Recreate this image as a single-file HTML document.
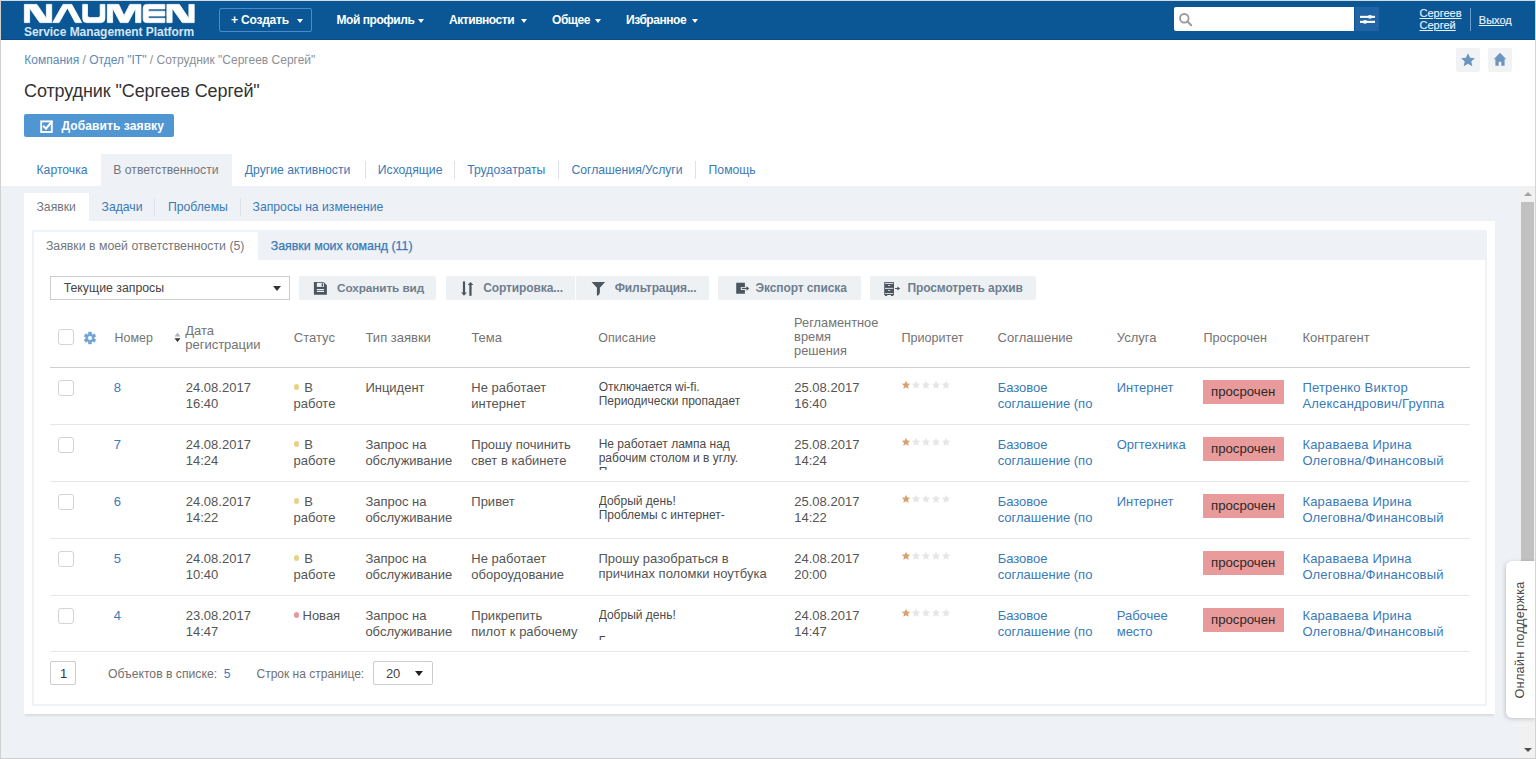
<!DOCTYPE html>
<html><head><meta charset="utf-8"><title>Naumen SMP</title>
<style>
html,body{margin:0;padding:0;width:1536px;height:759px;overflow:hidden;background:#fff;font-family:"Liberation Sans", sans-serif;}
.r{position:absolute;}
.t{position:absolute;white-space:nowrap;}
.caret{position:absolute;width:0;height:0;border-style:solid;border-width:4px 4px 0 4px;border-color:transparent;border-top-color:#fff;}
u{text-decoration:underline;text-underline-offset:1px;}
</style></head><body>
<div class="r" style="left:0px;top:0px;width:1536px;height:759px;background:#fff"></div>
<div class="r" style="left:1px;top:186px;width:1534px;height:572px;background:#eef1f5"></div>
<div class="r" style="left:1px;top:1px;width:1534px;height:39px;background:#0b5795"></div>
<div class="r" style="left:1px;top:39px;width:1534px;height:1px;background:#0a4c88"></div>
<svg class="r" style="left:0;top:0" width="200" height="40" viewBox="0 0 200 40">
<g fill="#fff" stroke="#fff" stroke-width="0.8" stroke-linejoin="round">
<path d="M24.4,4.4 H36.9 L46.4,18.4 V4.4 H51.7 V22.6 H39.8 L29.6,8.2 V22.6 H24.4 Z"/>
<path d="M52.7,22.6 L63,4.4 H71.8 L81.7,22.6 H75.3 L67.4,7.9 L59.1,22.6 Z"/>
<path d="M82.7,4.4 H87.5 V15.4 Q87.5,17.6 89.7,17.6 H98 Q100.2,17.6 100.2,15.4 V4.4 H104.9 V18.6 Q104.9,22.6 100.9,22.6 H86.7 Q82.7,22.6 82.7,18.6 Z"/>
<path d="M107.4,22.6 V4.4 H118.8 L124,15.7 L129.8,4.4 H140.9 V22.6 H135.6 V8.2 L128.1,22.6 H120.3 L112.6,8.2 V22.6 Z"/>
<path d="M143.2,7.8 Q143.2,4.4 146.6,4.4 H164.8 V8.9 H148.3 V11.2 H164.8 V16 H148.3 V18.3 H164.8 V22.6 H146.6 Q143.2,22.6 143.2,19.2 Z"/>
<path d="M166.9,4.4 H179.4 L188.9,18.4 V4.4 H194.2 V22.6 H182.3 L172.1,8.2 V22.6 H166.9 Z"/>
</g></svg>
<div class="t" style="left:24.0px;top:24.54px;font-size:12px;line-height:14px;color:#d3e6f8;font-weight:bold;letter-spacing:-0.05px">Service Management Platform</div>
<div class="r" style="left:219px;top:8px;width:93px;height:24px;border:1px solid #4a8ccb;border-radius:2px;box-sizing:border-box"></div>
<div class="t" style="left:231.0px;top:12.04px;font-size:12px;line-height:16px;color:#fff;font-weight:bold;letter-spacing:-0.2px">+ Создать</div>
<div class="caret" style="left:297px;top:19px;border-top-color:#fff;border-width:4px 3.5px 0 3.5px"></div>
<div class="t" style="left:336.5px;top:12.04px;font-size:12px;line-height:16px;color:#fff;font-weight:bold;letter-spacing:-0.45px">Мой профиль</div>
<div class="caret" style="left:418px;top:19px;border-top-color:#fff;border-width:4px 3px 0 3px"></div>
<div class="t" style="left:449.0px;top:12.04px;font-size:12px;line-height:16px;color:#fff;font-weight:bold;letter-spacing:-0.45px">Активности</div>
<div class="caret" style="left:521px;top:19px;border-top-color:#fff;border-width:4px 3px 0 3px"></div>
<div class="t" style="left:552.0px;top:12.04px;font-size:12px;line-height:16px;color:#fff;font-weight:bold;letter-spacing:-0.45px">Общее</div>
<div class="caret" style="left:595px;top:19px;border-top-color:#fff;border-width:4px 3px 0 3px"></div>
<div class="t" style="left:626.0px;top:12.04px;font-size:12px;line-height:16px;color:#fff;font-weight:bold;letter-spacing:-0.45px">Избранное</div>
<div class="caret" style="left:692px;top:19px;border-top-color:#fff;border-width:4px 3px 0 3px"></div>
<div class="r" style="left:1174px;top:7px;width:180px;height:24px;background:#fff;border-radius:2px 0 0 2px"></div>
<svg class="r" style="left:1178px;top:12px" width="16" height="16" viewBox="0 0 16 16"><circle cx="6.3" cy="6.3" r="4.3" fill="none" stroke="#9a9a9a" stroke-width="1.8"/><path d="M9.5,9.5 L13.2,13.2" stroke="#9a9a9a" stroke-width="2" stroke-linecap="round"/></svg>
<div class="r" style="left:1355px;top:7px;width:24px;height:24px;background:#2064a5"></div>
<svg class="r" style="left:1355px;top:7px" width="24" height="24" viewBox="0 0 24 24"><g fill="#fff"><rect x="5" y="8.8" width="15" height="2.1"/><rect x="5" y="13.8" width="15" height="2.1"/><ellipse cx="15" cy="9.85" rx="2.2" ry="1.9"/><ellipse cx="10" cy="14.85" rx="2.2" ry="1.9"/></g></svg>
<div class="t" style="left:1419.5px;top:7.49px;font-size:11px;line-height:12px;color:#e9f1fa;font-weight:normal;-webkit-text-stroke:0.15px currentColor"><u>Сергеев</u></div>
<div class="t" style="left:1419.5px;top:19.39px;font-size:11px;line-height:12px;color:#e9f1fa;font-weight:normal;-webkit-text-stroke:0.15px currentColor"><u>Сергей</u></div>
<div class="r" style="left:1470px;top:8px;width:1px;height:23px;background:#6d9dd0"></div>
<div class="t" style="left:1478.8px;top:14.09px;font-size:11px;line-height:12px;color:#e9f1fa;font-weight:normal;-webkit-text-stroke:0.15px currentColor"><u>Выход</u></div>
<div class="r" style="left:1456px;top:48px;width:24px;height:24px;background:#f0f2f4;border-radius:2px"></div>
<div class="r" style="left:1488px;top:48px;width:24px;height:24px;background:#f0f2f4;border-radius:2px"></div>
<svg class="r" style="left:1456px;top:48px" width="24" height="24" viewBox="0 0 24 24"><path fill="#6b95bf" d="M12,5.3 L14.1,9.8 L18.9,10.3 L15.3,13.5 L16.3,18.3 L12,15.8 L7.7,18.3 L8.7,13.5 L5.1,10.3 L9.9,9.8 Z"/></svg>
<svg class="r" style="left:1488px;top:48px" width="24" height="24" viewBox="0 0 24 24"><path fill="#6b95bf" d="M12,4.8 L18.2,11.2 H16.6 V17.8 H13.3 V13.8 H10.7 V17.8 H7.4 V11.2 H5.8 Z"/></svg>
<div class="t" style="left:24.3px;top:52.74px;font-size:12px;line-height:14px;color:#8a8f95;font-weight:normal;"><span style="color:#5b8ab6">Компания</span> / <span style="color:#5b8ab6">Отдел "IT"</span> / Сотрудник "Сергеев Сергей"</div>
<div class="t" style="left:24.0px;top:79.86px;font-size:18px;line-height:22px;color:#333;font-weight:normal;letter-spacing:-0.1px">Сотрудник "Сергеев Сергей"</div>
<div class="r" style="left:24px;top:114px;width:150px;height:23px;background:#5096d3;border-radius:2px"></div>
<svg class="r" style="left:24px;top:110px" width="40" height="30" viewBox="0 0 40 30"><rect x="17.2" y="11.4" width="10.6" height="10.6" fill="none" stroke="#fff" stroke-width="1.9"/><path d="M19.2,15.8 L22,18.7 L28.3,11" fill="none" stroke="#fff" stroke-width="2"/></svg>
<div class="t" style="left:61.5px;top:118.24px;font-size:12px;line-height:16px;color:#fff;font-weight:bold;letter-spacing:0.1px">Добавить заявку</div>
<div class="r" style="left:101px;top:154px;width:131px;height:32px;background:#eef1f5"></div>
<div class="t" style="left:36.5px;top:161.97px;font-size:12.2px;line-height:16px;color:#3a7ab7;font-weight:normal;">Карточка</div>
<div class="t" style="left:113.3px;top:161.97px;font-size:12.2px;line-height:16px;color:#73777c;font-weight:normal;">В ответственности</div>
<div class="t" style="left:244.8px;top:161.97px;font-size:12.2px;line-height:16px;color:#3a7ab7;font-weight:normal;">Другие активности</div>
<div class="t" style="left:377.8px;top:161.97px;font-size:12.2px;line-height:16px;color:#3a7ab7;font-weight:normal;">Исходящие</div>
<div class="t" style="left:467.2px;top:161.97px;font-size:12.2px;line-height:16px;color:#3a7ab7;font-weight:normal;">Трудозатраты</div>
<div class="t" style="left:571.4px;top:161.97px;font-size:12.2px;line-height:16px;color:#3a7ab7;font-weight:normal;">Соглашения/Услуги</div>
<div class="t" style="left:708.6px;top:161.97px;font-size:12.2px;line-height:16px;color:#3a7ab7;font-weight:normal;">Помощь</div>
<div class="r" style="left:365px;top:161px;width:1px;height:18px;background:#dde2e8"></div>
<div class="r" style="left:454px;top:161px;width:1px;height:18px;background:#dde2e8"></div>
<div class="r" style="left:558px;top:161px;width:1px;height:18px;background:#dde2e8"></div>
<div class="r" style="left:695px;top:161px;width:1px;height:18px;background:#dde2e8"></div>
<div class="r" style="left:24px;top:193px;width:65px;height:28px;background:#fff"></div>
<div class="t" style="left:36.5px;top:199.17px;font-size:12.2px;line-height:16px;color:#73777c;font-weight:normal;">Заявки</div>
<div class="t" style="left:101.6px;top:199.17px;font-size:12.2px;line-height:16px;color:#3a7ab7;font-weight:normal;">Задачи</div>
<div class="t" style="left:168.0px;top:199.17px;font-size:12.2px;line-height:16px;color:#3a7ab7;font-weight:normal;">Проблемы</div>
<div class="t" style="left:252.6px;top:199.17px;font-size:12.2px;line-height:16px;color:#3a7ab7;font-weight:normal;">Запросы на изменение</div>
<div class="r" style="left:154px;top:198px;width:1px;height:18px;background:#dde2e8"></div>
<div class="r" style="left:240px;top:198px;width:1px;height:18px;background:#dde2e8"></div>
<div class="r" style="left:24px;top:221px;width:1471px;height:493px;background:#fff;box-shadow:0 3px 2px -1px rgba(0,0,0,0.09)"></div>
<div class="r" style="left:32px;top:230px;width:1455px;height:476px;border:2px solid #f0f3f6;box-sizing:border-box;background:#fff"></div>
<div class="r" style="left:32px;top:230px;width:1455px;height:30px;background:#eef1f5"></div>
<div class="r" style="left:34px;top:232px;width:224px;height:28px;background:#fff"></div>
<div class="t" style="left:45.9px;top:237.74px;font-size:12.3px;line-height:16px;color:#73777c;font-weight:normal;">Заявки в моей ответственности (5)</div>
<div class="t" style="left:270.7px;top:237.70px;font-size:12.4px;line-height:16px;color:#3a7ab7;font-weight:normal;-webkit-text-stroke:0.25px currentColor">Заявки моих команд (11)</div>
<div class="r" style="left:50px;top:276px;width:240px;height:24px;border:1px solid #c9cdd2;box-sizing:border-box;background:#fff"></div>
<div class="t" style="left:63.7px;top:279.74px;font-size:12.3px;line-height:16px;color:#444;font-weight:normal;">Текущие запросы</div>
<div class="caret" style="left:273px;top:286px;border-top-color:#333;border-width:5px 4px 0 4px"></div>
<div class="r" style="left:299px;top:276px;width:137px;height:24px;background:#eef1f4;border-radius:2px"></div>
<div class="r" style="left:446px;top:276px;width:130px;height:24px;background:#eef1f4;border-radius:2px"></div>
<div class="r" style="left:576px;top:276px;width:133px;height:24px;background:#eef1f4;border-radius:2px"></div>
<div class="r" style="left:718px;top:276px;width:143px;height:24px;background:#eef1f4;border-radius:2px"></div>
<div class="r" style="left:870px;top:276px;width:166px;height:24px;background:#eef1f4;border-radius:2px"></div>
<div class="r" style="left:575px;top:276px;width:1px;height:24px;background:#fff"></div>
<div class="t" style="left:337.0px;top:279.91px;font-size:11.8px;line-height:16px;color:#6e7f8f;font-weight:bold;letter-spacing:-0.1px">Сохранить вид</div>
<div class="t" style="left:483.2px;top:279.84px;font-size:12px;line-height:16px;color:#6e7f8f;font-weight:bold;letter-spacing:-0.1px">Сортировка...</div>
<div class="t" style="left:614.7px;top:279.84px;font-size:12px;line-height:16px;color:#6e7f8f;font-weight:bold;letter-spacing:-0.1px">Фильтрация...</div>
<div class="t" style="left:755.5px;top:279.84px;font-size:12px;line-height:16px;color:#6e7f8f;font-weight:bold;letter-spacing:-0.1px">Экспорт списка</div>
<div class="t" style="left:907.4px;top:279.84px;font-size:12px;line-height:16px;color:#6e7f8f;font-weight:bold;letter-spacing:-0.1px">Просмотреть архив</div>
<svg class="r" style="left:306px;top:276px" width="30" height="24" viewBox="0 0 30 24"><path fill="#4d565f" d="M7.9,5.9 H17.6 L20.9,9.2 V18.8 H7.9 Z"/><rect x="10.9" y="6.8" width="7.1" height="4.1" fill="#eef1f4"/><rect x="15.6" y="7.3" width="1.5" height="3.1" fill="#4d565f"/><rect x="10.9" y="13" width="7.1" height="1.2" fill="#eef1f4"/><rect x="10.9" y="14.9" width="7.1" height="1.1" fill="#eef1f4"/></svg>
<svg class="r" style="left:455px;top:276px" width="30" height="24" viewBox="0 0 30 24"><rect x="7.9" y="5.4" width="2.2" height="11.6" fill="#4d565f"/><path fill="#4d565f" d="M6.1,16.6 H11.9 L9,19.8 Z"/><rect x="14.3" y="8.5" width="2.3" height="11.3" fill="#4d565f"/><path fill="#4d565f" d="M12.6,9 H18.4 L15.5,5.9 Z"/></svg>
<svg class="r" style="left:585px;top:276px" width="30" height="24" viewBox="0 0 30 24"><path fill="#4d565f" d="M6.6,5.9 H20.1 L14.9,11.8 V16.4 Q14.6,19.2 11.9,19.8 V11.8 Z"/></svg>
<svg class="r" style="left:730px;top:276px" width="30" height="24" viewBox="0 0 30 24"><path fill="#4d565f" d="M6.2,6.8 H14.9 V10.9 H10.8 V13.9 H14.9 V17.7 H6.2 Z"/><rect x="11.8" y="11.8" width="5" height="1.3" fill="#4d565f"/><path fill="#4d565f" d="M16.5,10 L19.2,12.4 L16.5,14.8 Z"/></svg>
<svg class="r" style="left:878px;top:276px" width="30" height="24" viewBox="0 0 30 24"><rect x="6.2" y="5.9" width="9.8" height="13.1" rx="0.6" fill="#4d565f"/><rect x="6.8" y="18.4" width="2.5" height="1.5" rx="0.6" fill="#4d565f"/><rect x="12.9" y="18.4" width="2.5" height="1.5" rx="0.6" fill="#4d565f"/><rect x="7" y="6.9" width="8.2" height="0.9" fill="#eef1f4"/><rect x="7" y="11.9" width="8.2" height="0.9" fill="#eef1f4"/><rect x="7" y="17" width="8.2" height="0.8" fill="#eef1f4"/><rect x="10" y="9.2" width="2.2" height="0.8" fill="#eef1f4"/><rect x="10" y="14.1" width="2.2" height="0.8" fill="#eef1f4"/><rect x="17" y="12" width="3" height="1" fill="#4d565f"/><path fill="#4d565f" d="M19.4,10.4 L22.2,12.5 L19.4,14.6 Z"/></svg>
<div class="r" style="left:58px;top:329px;width:16px;height:16px;border:1.5px solid #d3d3d3;border-radius:3px;box-sizing:border-box;background:#fff"></div>
<svg class="r" style="left:83px;top:330.7px" width="14" height="14" viewBox="0 0 14 14"><path fill="#6ea3d4" fill-rule="evenodd" stroke="#6ea3d4" stroke-width="0.5" stroke-linejoin="round" d="M5.33,3.25 L5.52,1.08 L8.48,1.08 L8.67,3.25 L9.41,3.68 L11.39,2.76 L12.86,5.32 L11.08,6.57 L11.08,7.43 L12.86,8.68 L11.39,11.24 L9.41,10.32 L8.67,10.75 L8.48,12.92 L5.52,12.92 L5.33,10.75 L4.59,10.32 L2.61,11.24 L1.14,8.68 L2.92,7.43 L2.92,6.57 L1.14,5.32 L2.61,2.76 L4.59,3.68 Z M7,4.7 A2.3,2.3 0 1 0 7,9.3 A2.3,2.3 0 1 0 7,4.7 Z"/></svg>
<div class="t" style="left:114.4px;top:331.20px;font-size:12.4px;line-height:14px;color:#737373;font-weight:normal;letter-spacing:0.1px">Номер</div>
<svg class="r" style="left:174px;top:332px" width="7" height="11" viewBox="0 0 7 11"><path fill="#b0b0b0" d="M0.5,4.5 L3.5,0.8 L6.5,4.5 Z"/><path fill="#333" d="M0.5,6.3 L3.5,10 L6.5,6.3 Z"/></svg>
<div class="t" style="left:185.2px;top:323.70px;font-size:13px;line-height:14px;color:#737373;font-weight:normal;">Дата</div>
<div class="t" style="left:185.2px;top:337.80px;font-size:13px;line-height:14px;color:#737373;font-weight:normal;">регистрации</div>
<div class="t" style="left:293.8px;top:331.00px;font-size:13px;line-height:14px;color:#737373;font-weight:normal;">Статус</div>
<div class="t" style="left:365.5px;top:331.00px;font-size:13px;line-height:14px;color:#737373;font-weight:normal;">Тип заявки</div>
<div class="t" style="left:471.4px;top:331.00px;font-size:13px;line-height:14px;color:#737373;font-weight:normal;">Тема</div>
<div class="t" style="left:598.3px;top:331.20px;font-size:12.4px;line-height:14px;color:#737373;font-weight:normal;letter-spacing:0.1px">Описание</div>
<div class="t" style="left:794.1px;top:315.86px;font-size:12.8px;line-height:14px;color:#737373;font-weight:normal;">Регламентное</div>
<div class="t" style="left:794.1px;top:330.16px;font-size:12.8px;line-height:14px;color:#737373;font-weight:normal;">время</div>
<div class="t" style="left:794.1px;top:344.36px;font-size:12.8px;line-height:14px;color:#737373;font-weight:normal;">решения</div>
<div class="t" style="left:901.4px;top:331.13px;font-size:12.6px;line-height:14px;color:#737373;font-weight:normal;">Приоритет</div>
<div class="t" style="left:997.6px;top:331.00px;font-size:13px;line-height:14px;color:#737373;font-weight:normal;">Соглашение</div>
<div class="t" style="left:1116.8px;top:331.00px;font-size:13px;line-height:14px;color:#737373;font-weight:normal;">Услуга</div>
<div class="t" style="left:1203.4px;top:331.13px;font-size:12.6px;line-height:14px;color:#737373;font-weight:normal;">Просрочен</div>
<div class="t" style="left:1302.4px;top:331.00px;font-size:13px;line-height:14px;color:#737373;font-weight:normal;">Контрагент</div>
<div class="r" style="left:50px;top:367px;width:1420px;height:1px;background:#cfcfcf"></div>
<div class="r" style="left:58px;top:380px;width:16px;height:16px;border:1.5px solid #d3d3d3;border-radius:3px;box-sizing:border-box;background:#fff"></div>
<div class="t" style="left:113.8px;top:379.80px;font-size:13px;line-height:16px;color:#3a7ab7;font-weight:normal;">8</div>
<div class="t" style="left:185.8px;top:379.80px;font-size:13px;line-height:16px;color:#555;font-weight:normal;">24.08.2017<br>16:40</div>
<div class="r" style="left:293.5px;top:384px;width:5.6px;height:5.6px;border-radius:50%;background:#e6d38a"></div>
<div class="t" style="left:293.5px;top:379.80px;font-size:13px;line-height:16px;color:#555;font-weight:normal;">&nbsp;&nbsp;&nbsp;В<br>работе</div>
<div class="t" style="left:365.4px;top:379.80px;font-size:13px;line-height:16px;color:#555;font-weight:normal;">Инцидент</div>
<div class="t" style="left:471.3px;top:379.80px;font-size:13px;line-height:16px;color:#555;font-weight:normal;">Не работает<br>интернет</div>
<div class="t" style="left:598.7px;top:380.44px;height:32.6px;overflow:hidden;font-size:12px;line-height:14px;color:#4a4a4a">Отключается wi-fi.<br>Периодически пропадает</div>
<div class="t" style="left:794.3px;top:379.80px;font-size:13px;line-height:16px;color:#555;font-weight:normal;">25.08.2017<br>16:40</div>
<svg class="r" style="left:901.4px;top:380px" width="52" height="10" viewBox="0 0 52 10"><path transform="translate(0.00,0)" fill="#d7a26e" d="M5.00,0.70 L6.26,3.46 L9.28,3.81 L7.04,5.86 L7.65,8.84 L5.00,7.35 L2.35,8.84 L2.96,5.86 L0.72,3.81 L3.74,3.46 Z"/><path transform="translate(10.00,0)" fill="#e6e6e6" d="M5.00,0.70 L6.26,3.46 L9.28,3.81 L7.04,5.86 L7.65,8.84 L5.00,7.35 L2.35,8.84 L2.96,5.86 L0.72,3.81 L3.74,3.46 Z"/><path transform="translate(20.00,0)" fill="#e6e6e6" d="M5.00,0.70 L6.26,3.46 L9.28,3.81 L7.04,5.86 L7.65,8.84 L5.00,7.35 L2.35,8.84 L2.96,5.86 L0.72,3.81 L3.74,3.46 Z"/><path transform="translate(30.00,0)" fill="#e6e6e6" d="M5.00,0.70 L6.26,3.46 L9.28,3.81 L7.04,5.86 L7.65,8.84 L5.00,7.35 L2.35,8.84 L2.96,5.86 L0.72,3.81 L3.74,3.46 Z"/><path transform="translate(40.00,0)" fill="#e6e6e6" d="M5.00,0.70 L6.26,3.46 L9.28,3.81 L7.04,5.86 L7.65,8.84 L5.00,7.35 L2.35,8.84 L2.96,5.86 L0.72,3.81 L3.74,3.46 Z"/></svg>
<div class="t" style="left:997.7px;top:379.80px;font-size:13px;line-height:16px;color:#3a7ab7;font-weight:normal;">Базовое<br>соглашение (по</div>
<div class="t" style="left:1116.7px;top:379.80px;font-size:13px;line-height:16px;color:#3a7ab7;font-weight:normal;">Интернет</div>
<div class="r" style="left:1203px;top:380px;width:81px;height:24px;background:#e99b9c"></div>
<div class="t" style="left:1211.0px;top:384.43px;font-size:13.2px;line-height:16px;color:#2a2a2a;font-weight:normal;">просрочен</div>
<div class="t" style="left:1302.4px;top:379.80px;font-size:13px;line-height:16px;color:#3a7ab7;font-weight:normal;letter-spacing:0.2px">Петренко Виктор<br>Александрович/Группа</div>
<div class="r" style="left:50px;top:424px;width:1420px;height:1px;background:#e4e7ea"></div>
<div class="r" style="left:58px;top:437px;width:16px;height:16px;border:1.5px solid #d3d3d3;border-radius:3px;box-sizing:border-box;background:#fff"></div>
<div class="t" style="left:113.8px;top:436.80px;font-size:13px;line-height:16px;color:#3a7ab7;font-weight:normal;">7</div>
<div class="t" style="left:185.8px;top:436.80px;font-size:13px;line-height:16px;color:#555;font-weight:normal;">24.08.2017<br>14:24</div>
<div class="r" style="left:293.5px;top:441px;width:5.6px;height:5.6px;border-radius:50%;background:#e6d38a"></div>
<div class="t" style="left:293.5px;top:436.80px;font-size:13px;line-height:16px;color:#555;font-weight:normal;">&nbsp;&nbsp;&nbsp;В<br>работе</div>
<div class="t" style="left:365.4px;top:436.80px;font-size:13px;line-height:16px;color:#555;font-weight:normal;">Запрос на<br>обслуживание</div>
<div class="t" style="left:471.3px;top:436.80px;font-size:13px;line-height:16px;color:#555;font-weight:normal;">Прошу починить<br>свет в кабинете</div>
<div class="t" style="left:598.7px;top:437.44px;height:32.6px;overflow:hidden;font-size:12px;line-height:14px;color:#4a4a4a">Не работает лампа над<br>рабочим столом и в углу.<br>П</div>
<div class="t" style="left:794.3px;top:436.80px;font-size:13px;line-height:16px;color:#555;font-weight:normal;">25.08.2017<br>14:24</div>
<svg class="r" style="left:901.4px;top:437px" width="52" height="10" viewBox="0 0 52 10"><path transform="translate(0.00,0)" fill="#d7a26e" d="M5.00,0.70 L6.26,3.46 L9.28,3.81 L7.04,5.86 L7.65,8.84 L5.00,7.35 L2.35,8.84 L2.96,5.86 L0.72,3.81 L3.74,3.46 Z"/><path transform="translate(10.00,0)" fill="#e6e6e6" d="M5.00,0.70 L6.26,3.46 L9.28,3.81 L7.04,5.86 L7.65,8.84 L5.00,7.35 L2.35,8.84 L2.96,5.86 L0.72,3.81 L3.74,3.46 Z"/><path transform="translate(20.00,0)" fill="#e6e6e6" d="M5.00,0.70 L6.26,3.46 L9.28,3.81 L7.04,5.86 L7.65,8.84 L5.00,7.35 L2.35,8.84 L2.96,5.86 L0.72,3.81 L3.74,3.46 Z"/><path transform="translate(30.00,0)" fill="#e6e6e6" d="M5.00,0.70 L6.26,3.46 L9.28,3.81 L7.04,5.86 L7.65,8.84 L5.00,7.35 L2.35,8.84 L2.96,5.86 L0.72,3.81 L3.74,3.46 Z"/><path transform="translate(40.00,0)" fill="#e6e6e6" d="M5.00,0.70 L6.26,3.46 L9.28,3.81 L7.04,5.86 L7.65,8.84 L5.00,7.35 L2.35,8.84 L2.96,5.86 L0.72,3.81 L3.74,3.46 Z"/></svg>
<div class="t" style="left:997.7px;top:436.80px;font-size:13px;line-height:16px;color:#3a7ab7;font-weight:normal;">Базовое<br>соглашение (по</div>
<div class="t" style="left:1116.7px;top:436.80px;font-size:13px;line-height:16px;color:#3a7ab7;font-weight:normal;">Оргтехника</div>
<div class="r" style="left:1203px;top:437px;width:81px;height:24px;background:#e99b9c"></div>
<div class="t" style="left:1211.0px;top:441.43px;font-size:13.2px;line-height:16px;color:#2a2a2a;font-weight:normal;">просрочен</div>
<div class="t" style="left:1302.4px;top:436.80px;font-size:13px;line-height:16px;color:#3a7ab7;font-weight:normal;letter-spacing:0.2px">Караваева Ирина<br>Олеговна/Финансовый</div>
<div class="r" style="left:50px;top:481px;width:1420px;height:1px;background:#e4e7ea"></div>
<div class="r" style="left:58px;top:494px;width:16px;height:16px;border:1.5px solid #d3d3d3;border-radius:3px;box-sizing:border-box;background:#fff"></div>
<div class="t" style="left:113.8px;top:493.80px;font-size:13px;line-height:16px;color:#3a7ab7;font-weight:normal;">6</div>
<div class="t" style="left:185.8px;top:493.80px;font-size:13px;line-height:16px;color:#555;font-weight:normal;">24.08.2017<br>14:22</div>
<div class="r" style="left:293.5px;top:498px;width:5.6px;height:5.6px;border-radius:50%;background:#e6d38a"></div>
<div class="t" style="left:293.5px;top:493.80px;font-size:13px;line-height:16px;color:#555;font-weight:normal;">&nbsp;&nbsp;&nbsp;В<br>работе</div>
<div class="t" style="left:365.4px;top:493.80px;font-size:13px;line-height:16px;color:#555;font-weight:normal;">Запрос на<br>обслуживание</div>
<div class="t" style="left:471.3px;top:493.80px;font-size:13px;line-height:16px;color:#555;font-weight:normal;">Привет</div>
<div class="t" style="left:598.7px;top:494.44px;height:32.6px;overflow:hidden;font-size:12px;line-height:14px;color:#4a4a4a">Добрый день!<br>Проблемы с интернет-</div>
<div class="t" style="left:794.3px;top:493.80px;font-size:13px;line-height:16px;color:#555;font-weight:normal;">25.08.2017<br>14:22</div>
<svg class="r" style="left:901.4px;top:494px" width="52" height="10" viewBox="0 0 52 10"><path transform="translate(0.00,0)" fill="#d7a26e" d="M5.00,0.70 L6.26,3.46 L9.28,3.81 L7.04,5.86 L7.65,8.84 L5.00,7.35 L2.35,8.84 L2.96,5.86 L0.72,3.81 L3.74,3.46 Z"/><path transform="translate(10.00,0)" fill="#e6e6e6" d="M5.00,0.70 L6.26,3.46 L9.28,3.81 L7.04,5.86 L7.65,8.84 L5.00,7.35 L2.35,8.84 L2.96,5.86 L0.72,3.81 L3.74,3.46 Z"/><path transform="translate(20.00,0)" fill="#e6e6e6" d="M5.00,0.70 L6.26,3.46 L9.28,3.81 L7.04,5.86 L7.65,8.84 L5.00,7.35 L2.35,8.84 L2.96,5.86 L0.72,3.81 L3.74,3.46 Z"/><path transform="translate(30.00,0)" fill="#e6e6e6" d="M5.00,0.70 L6.26,3.46 L9.28,3.81 L7.04,5.86 L7.65,8.84 L5.00,7.35 L2.35,8.84 L2.96,5.86 L0.72,3.81 L3.74,3.46 Z"/><path transform="translate(40.00,0)" fill="#e6e6e6" d="M5.00,0.70 L6.26,3.46 L9.28,3.81 L7.04,5.86 L7.65,8.84 L5.00,7.35 L2.35,8.84 L2.96,5.86 L0.72,3.81 L3.74,3.46 Z"/></svg>
<div class="t" style="left:997.7px;top:493.80px;font-size:13px;line-height:16px;color:#3a7ab7;font-weight:normal;">Базовое<br>соглашение (по</div>
<div class="t" style="left:1116.7px;top:493.80px;font-size:13px;line-height:16px;color:#3a7ab7;font-weight:normal;">Интернет</div>
<div class="r" style="left:1203px;top:494px;width:81px;height:24px;background:#e99b9c"></div>
<div class="t" style="left:1211.0px;top:498.43px;font-size:13.2px;line-height:16px;color:#2a2a2a;font-weight:normal;">просрочен</div>
<div class="t" style="left:1302.4px;top:493.80px;font-size:13px;line-height:16px;color:#3a7ab7;font-weight:normal;letter-spacing:0.2px">Караваева Ирина<br>Олеговна/Финансовый</div>
<div class="r" style="left:50px;top:538px;width:1420px;height:1px;background:#e4e7ea"></div>
<div class="r" style="left:58px;top:551px;width:16px;height:16px;border:1.5px solid #d3d3d3;border-radius:3px;box-sizing:border-box;background:#fff"></div>
<div class="t" style="left:113.8px;top:550.80px;font-size:13px;line-height:16px;color:#3a7ab7;font-weight:normal;">5</div>
<div class="t" style="left:185.8px;top:550.80px;font-size:13px;line-height:16px;color:#555;font-weight:normal;">24.08.2017<br>10:40</div>
<div class="r" style="left:293.5px;top:555px;width:5.6px;height:5.6px;border-radius:50%;background:#e6d38a"></div>
<div class="t" style="left:293.5px;top:550.80px;font-size:13px;line-height:16px;color:#555;font-weight:normal;">&nbsp;&nbsp;&nbsp;В<br>работе</div>
<div class="t" style="left:365.4px;top:550.80px;font-size:13px;line-height:16px;color:#555;font-weight:normal;">Запрос на<br>обслуживание</div>
<div class="t" style="left:471.3px;top:550.80px;font-size:13px;line-height:16px;color:#555;font-weight:normal;">Не работает<br>обороудование</div>
<div class="t" style="left:598.5px;top:551.20px;font-size:13px;line-height:15px;color:#555;font-weight:normal;">Прошу разобраться в<br>причинах поломки ноутбука</div>
<div class="t" style="left:794.3px;top:550.80px;font-size:13px;line-height:16px;color:#555;font-weight:normal;">24.08.2017<br>20:00</div>
<svg class="r" style="left:901.4px;top:551px" width="52" height="10" viewBox="0 0 52 10"><path transform="translate(0.00,0)" fill="#d7a26e" d="M5.00,0.70 L6.26,3.46 L9.28,3.81 L7.04,5.86 L7.65,8.84 L5.00,7.35 L2.35,8.84 L2.96,5.86 L0.72,3.81 L3.74,3.46 Z"/><path transform="translate(10.00,0)" fill="#e6e6e6" d="M5.00,0.70 L6.26,3.46 L9.28,3.81 L7.04,5.86 L7.65,8.84 L5.00,7.35 L2.35,8.84 L2.96,5.86 L0.72,3.81 L3.74,3.46 Z"/><path transform="translate(20.00,0)" fill="#e6e6e6" d="M5.00,0.70 L6.26,3.46 L9.28,3.81 L7.04,5.86 L7.65,8.84 L5.00,7.35 L2.35,8.84 L2.96,5.86 L0.72,3.81 L3.74,3.46 Z"/><path transform="translate(30.00,0)" fill="#e6e6e6" d="M5.00,0.70 L6.26,3.46 L9.28,3.81 L7.04,5.86 L7.65,8.84 L5.00,7.35 L2.35,8.84 L2.96,5.86 L0.72,3.81 L3.74,3.46 Z"/><path transform="translate(40.00,0)" fill="#e6e6e6" d="M5.00,0.70 L6.26,3.46 L9.28,3.81 L7.04,5.86 L7.65,8.84 L5.00,7.35 L2.35,8.84 L2.96,5.86 L0.72,3.81 L3.74,3.46 Z"/></svg>
<div class="t" style="left:997.7px;top:550.80px;font-size:13px;line-height:16px;color:#3a7ab7;font-weight:normal;">Базовое<br>соглашение (по</div>
<div class="r" style="left:1203px;top:551px;width:81px;height:24px;background:#e99b9c"></div>
<div class="t" style="left:1211.0px;top:555.43px;font-size:13.2px;line-height:16px;color:#2a2a2a;font-weight:normal;">просрочен</div>
<div class="t" style="left:1302.4px;top:550.80px;font-size:13px;line-height:16px;color:#3a7ab7;font-weight:normal;letter-spacing:0.2px">Караваева Ирина<br>Олеговна/Финансовый</div>
<div class="r" style="left:50px;top:595px;width:1420px;height:1px;background:#e4e7ea"></div>
<div class="r" style="left:58px;top:608px;width:16px;height:16px;border:1.5px solid #d3d3d3;border-radius:3px;box-sizing:border-box;background:#fff"></div>
<div class="t" style="left:113.8px;top:607.80px;font-size:13px;line-height:16px;color:#3a7ab7;font-weight:normal;">4</div>
<div class="t" style="left:185.8px;top:607.80px;font-size:13px;line-height:16px;color:#555;font-weight:normal;">23.08.2017<br>14:47</div>
<div class="r" style="left:293.5px;top:612px;width:5.6px;height:5.6px;border-radius:50%;background:#e89a9a"></div>
<div class="t" style="left:302.5px;top:607.80px;font-size:13px;line-height:16px;color:#555;font-weight:normal;">Новая</div>
<div class="t" style="left:365.4px;top:607.80px;font-size:13px;line-height:16px;color:#555;font-weight:normal;">Запрос на<br>обслуживание</div>
<div class="t" style="left:471.3px;top:607.80px;font-size:13px;line-height:16px;color:#555;font-weight:normal;">Прикрепить<br>пилот к рабочему</div>
<div class="t" style="left:598.7px;top:608.44px;height:31.6px;overflow:hidden;font-size:12px;line-height:14px;color:#4a4a4a">Добрый день!<br><br><span style="position:relative;top:-2px">Г</span></div>
<div class="t" style="left:794.3px;top:607.80px;font-size:13px;line-height:16px;color:#555;font-weight:normal;">24.08.2017<br>14:47</div>
<svg class="r" style="left:901.4px;top:608px" width="52" height="10" viewBox="0 0 52 10"><path transform="translate(0.00,0)" fill="#d7a26e" d="M5.00,0.70 L6.26,3.46 L9.28,3.81 L7.04,5.86 L7.65,8.84 L5.00,7.35 L2.35,8.84 L2.96,5.86 L0.72,3.81 L3.74,3.46 Z"/><path transform="translate(10.00,0)" fill="#e6e6e6" d="M5.00,0.70 L6.26,3.46 L9.28,3.81 L7.04,5.86 L7.65,8.84 L5.00,7.35 L2.35,8.84 L2.96,5.86 L0.72,3.81 L3.74,3.46 Z"/><path transform="translate(20.00,0)" fill="#e6e6e6" d="M5.00,0.70 L6.26,3.46 L9.28,3.81 L7.04,5.86 L7.65,8.84 L5.00,7.35 L2.35,8.84 L2.96,5.86 L0.72,3.81 L3.74,3.46 Z"/><path transform="translate(30.00,0)" fill="#e6e6e6" d="M5.00,0.70 L6.26,3.46 L9.28,3.81 L7.04,5.86 L7.65,8.84 L5.00,7.35 L2.35,8.84 L2.96,5.86 L0.72,3.81 L3.74,3.46 Z"/><path transform="translate(40.00,0)" fill="#e6e6e6" d="M5.00,0.70 L6.26,3.46 L9.28,3.81 L7.04,5.86 L7.65,8.84 L5.00,7.35 L2.35,8.84 L2.96,5.86 L0.72,3.81 L3.74,3.46 Z"/></svg>
<div class="t" style="left:997.7px;top:607.80px;font-size:13px;line-height:16px;color:#3a7ab7;font-weight:normal;">Базовое<br>соглашение (по</div>
<div class="t" style="left:1116.7px;top:607.80px;font-size:13px;line-height:16px;color:#3a7ab7;font-weight:normal;">Рабочее<br>место</div>
<div class="r" style="left:1203px;top:608px;width:81px;height:24px;background:#e99b9c"></div>
<div class="t" style="left:1211.0px;top:612.43px;font-size:13.2px;line-height:16px;color:#2a2a2a;font-weight:normal;">просрочен</div>
<div class="t" style="left:1302.4px;top:607.80px;font-size:13px;line-height:16px;color:#3a7ab7;font-weight:normal;letter-spacing:0.2px">Караваева Ирина<br>Олеговна/Финансовый</div>
<div class="r" style="left:50px;top:651px;width:1420px;height:1px;background:#e4e7ea"></div>
<div class="r" style="left:50px;top:661px;width:26px;height:24px;border:1px solid #c9cdd2;box-sizing:border-box;border-radius:2px"></div>
<div class="t" style="left:60.0px;top:666.10px;font-size:13px;line-height:16px;color:#333;font-weight:normal;">1</div>
<div class="t" style="left:108.0px;top:666.37px;font-size:12.2px;line-height:16px;color:#707070;font-weight:normal;">Объектов в списке: <span style="color:#3a7ab7">&nbsp;5</span></div>
<div class="t" style="left:256.5px;top:666.44px;font-size:12px;line-height:16px;color:#707070;font-weight:normal;">Строк на странице:</div>
<div class="r" style="left:373px;top:661px;width:60px;height:24px;border:1px solid #c9cdd2;box-sizing:border-box;border-radius:2px"></div>
<div class="t" style="left:385.9px;top:666.10px;font-size:13px;line-height:16px;color:#444;font-weight:normal;">20</div>
<div class="caret" style="left:415px;top:671px;border-top-color:#222;border-width:5px 4px 0 4px"></div>
<div class="r" style="left:1520px;top:186px;width:15px;height:572px;background:#f1f1f1"></div>
<div class="r" style="left:1521px;top:202px;width:13px;height:500px;background:#c1c1c1"></div>
<div class="caret" style="left:1524px;top:192px;border-top:none;border-bottom:4px solid #a3a3a3;border-left:4px solid transparent;border-right:4px solid transparent"></div>
<div class="caret" style="left:1524px;top:748px;border-top-color:#505050;border-width:4px 4px 0 4px"></div>
<div class="r" style="left:1506px;top:561px;width:30px;height:157px;background:#fff;border-radius:6px 0 0 6px;box-shadow:-1px 1px 4px rgba(0,0,0,0.18)"></div>
<div class="t" style="left:1520px;top:639.5px;width:0;height:0"><div style="position:absolute;left:0;top:0;transform:translate(-50%,-50%) rotate(-90deg);white-space:nowrap;font-size:12.8px;line-height:16px;color:#4a4a4a;letter-spacing:0.2px">Онлайн поддержка</div></div>
<div class="r" style="left:0px;top:0px;width:1536px;height:1px;background:#d3dbe3"></div>
<div class="r" style="left:0px;top:0px;width:1px;height:759px;background:#cfcfcf"></div>
<div class="r" style="left:1535px;top:0px;width:1px;height:759px;background:#d4d4d4"></div>
<div class="r" style="left:0px;top:758px;width:1536px;height:1px;background:#cfcfcf"></div>
</body></html>
